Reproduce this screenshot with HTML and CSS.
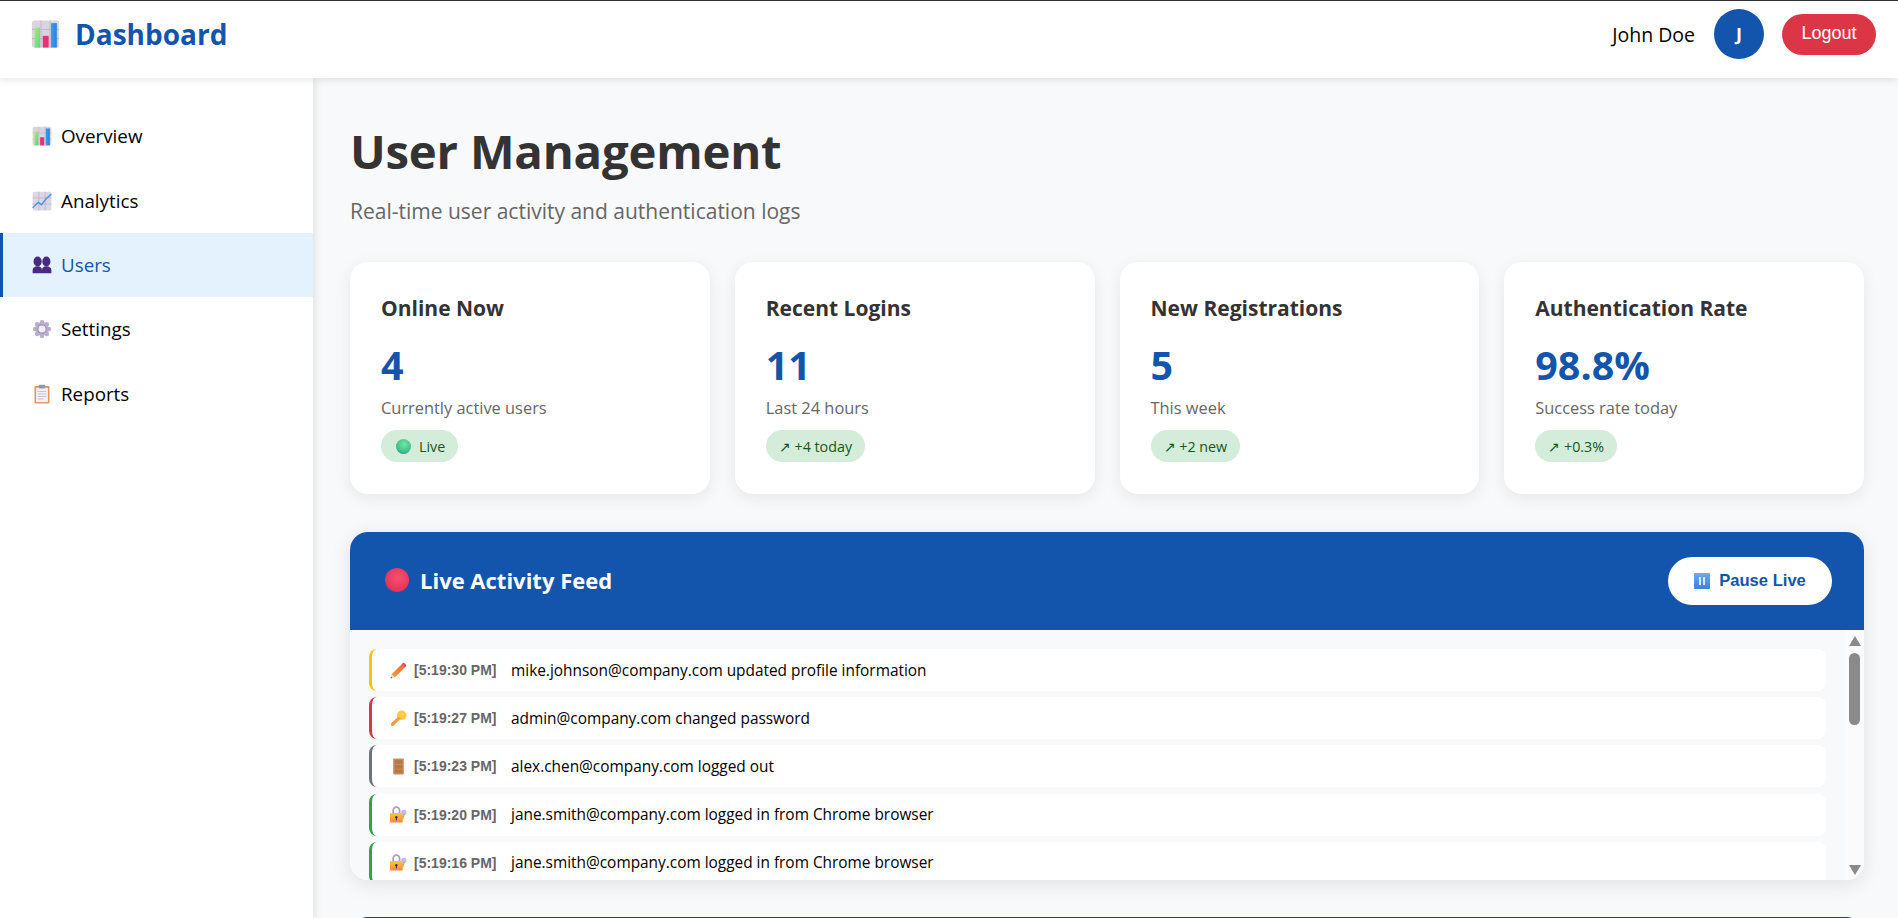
FILE: index.html
```html
<!DOCTYPE html>
<html lang="en">
<head>
<meta charset="utf-8">
<title>Dashboard</title>
<link rel="stylesheet" href="styles.css">
</head>
<body>
<svg class="defs" xmlns="http://www.w3.org/2000/svg" aria-hidden="true">
  <defs>
    <linearGradient id="gGreen" x1="0" y1="0" x2="1" y2="1"><stop offset="0" stop-color="#b5e86a"/><stop offset="1" stop-color="#4fd98a"/></linearGradient>
    <linearGradient id="gBlue" x1="0" y1="0" x2="1" y2="0"><stop offset="0" stop-color="#2fa4f2"/><stop offset="1" stop-color="#2a7fdc"/></linearGradient>
    <linearGradient id="gOrange" x1="0" y1="0" x2="0" y2="1"><stop offset="0" stop-color="#ffc83d"/><stop offset="1" stop-color="#f08a3c"/></linearGradient>
    <linearGradient id="gPencil" x1="0" y1="1" x2="1" y2="0"><stop offset="0" stop-color="#f9a13c"/><stop offset="1" stop-color="#f2662e"/></linearGradient>
    <linearGradient id="gPause" x1="0" y1="0" x2="0" y2="1"><stop offset="0" stop-color="#6aaaf5"/><stop offset="1" stop-color="#3f7fe0"/></linearGradient>
    <radialGradient id="gRed" cx=".55" cy=".4" r=".65"><stop offset="0" stop-color="#f8506e"/><stop offset=".75" stop-color="#e8385c"/><stop offset="1" stop-color="#c43656"/></radialGradient>
    <radialGradient id="gBall" cx=".55" cy=".35" r=".7"><stop offset="0" stop-color="#70e8a6"/><stop offset=".7" stop-color="#3fc38a"/><stop offset="1" stop-color="#2e8f86"/></radialGradient>
    <symbol id="i-bars" viewBox="0 0 32 32">
      <rect x="1" y="1" width="30" height="30" rx="3" fill="#d9d4e2"/>
      <path d="M11 1v30M21 1v30M1 11h30M1 21h30" stroke="#bdb5ca" stroke-width="1" fill="none"/>
      <rect x="4" y="9" width="6" height="22" fill="url(#gGreen)"/>
      <rect x="13" y="18" width="6.500" height="13" fill="#ea2f78"/>
      <rect x="22" y="4" width="6.500" height="27" fill="url(#gBlue)"/>
    </symbol>
    <symbol id="i-chart" viewBox="0 0 32 32">
      <rect x="1" y="1" width="30" height="30" rx="2.500" fill="#dcd6e6"/>
      <path d="M11 1v30M21 1v30M1 11h30M1 21h30" stroke="#b6aec6" stroke-width="1" fill="none"/>
      <path d="M1 27l9-9 5 4 8-10 8-7" stroke="#3a9ae8" stroke-width="2.200" fill="none"/>
    </symbol>
    <symbol id="i-users" viewBox="0 0 32 32">
      <g fill="#4a2a80">
        <ellipse cx="9" cy="10.500" rx="6.500" ry="8"/>
        <ellipse cx="23" cy="10.500" rx="6.500" ry="8"/>
        <path d="M1 29v-5c0-3 3-6 8-6s7 3 7 6c0-3 2-6 7-6s8 3 8 6v5z"/>
      </g>
    </symbol>
    <symbol id="i-gear" viewBox="0 0 32 32">
      <g fill="#b9aecf">
        <circle cx="16" cy="5" r="3.600"/><circle cx="16" cy="27" r="3.600"/>
        <circle cx="5" cy="16" r="3.600"/><circle cx="27" cy="16" r="3.600"/>
        <circle cx="8.200" cy="8.200" r="3.600"/><circle cx="23.800" cy="8.200" r="3.600"/>
        <circle cx="8.200" cy="23.800" r="3.600"/><circle cx="23.800" cy="23.800" r="3.600"/>
        <circle cx="16" cy="16" r="11"/>
      </g>
      <circle cx="16" cy="16" r="6.500" fill="#f2eef8"/>
      <circle cx="16" cy="16" r="6.500" fill="none" stroke="#8f81ab" stroke-width="1.500"/>
    </symbol>
    <symbol id="i-clip" viewBox="0 0 32 32">
      <rect x="4" y="3" width="24" height="28" rx="2" fill="#e0955c"/>
      <rect x="6.500" y="6" width="19" height="23" fill="#f3eff6"/>
      <rect x="11" y="1" width="10" height="6" rx="1.500" fill="#9b92a8"/>
      <path d="M9 12h14M9 16h14M9 20h14M9 24h9" stroke="#c2bacd" stroke-width="1.400"/>
    </symbol>
    <symbol id="i-pencil" viewBox="0 0 32 32">
      <path d="M3 23L21 5l6 6L9 29z" fill="url(#gPencil)"/>
      <path d="M21 5l3-3c1-1 2-1 3 0l3 3c1 1 1 2 0 3l-3 3z" fill="#f2475f"/>
      <path d="M3 23l-2 8 8-2z" fill="#f6d9b8"/>
      <path d="M1 31l1-3.500 2.500 2.500z" fill="#6b4a8a"/>
    </symbol>
    <symbol id="i-key" viewBox="0 0 32 32">
      <circle cx="22" cy="10" r="9" fill="#ffc83d"/>
      <path d="M16 12l4 4L6 30H2v-5z" fill="#f49a3a"/>
      <circle cx="24" cy="8" r="2" fill="#ffe08a"/>
    </symbol>
    <symbol id="i-door" viewBox="0 0 32 32">
      <rect x="6" y="1" width="20" height="30" rx="1.500" fill="#c88a5c"/>
      <rect x="9" y="4" width="14" height="7" fill="#b57648"/>
      <rect x="9" y="13" width="14" height="7" fill="#b57648"/>
      <rect x="9" y="22" width="14" height="6" fill="#b57648"/>
    </symbol>
    <symbol id="i-lock" viewBox="0 0 32 32">
      <circle cx="26" cy="12" r="5" fill="#c3bad3"/>
      <path d="M24 15l-2 9 3 1 3-9z" fill="#b1a6c6"/>
      <path d="M6 15V9c0-4 3-7 6-7s6 3 6 7v6" fill="none" stroke="#a99ec0" stroke-width="3.500"/>
      <rect x="0" y="13" width="24" height="18" rx="2" fill="url(#gOrange)"/>
      <circle cx="12" cy="21" r="2.200" fill="#432c5c"/>
      <rect x="11" y="21" width="2" height="6" fill="#432c5c"/>
    </symbol>
    <symbol id="i-pause" viewBox="0 0 32 32">
      <rect x="0" y="0" width="32" height="32" rx="2" fill="url(#gPause)"/>
      <rect x="10" y="8" width="4" height="16" fill="#dbe9fc"/>
      <rect x="18" y="8" width="4" height="16" fill="#dbe9fc"/>
    </symbol>
  </defs>
</svg>

<header class="topbar">
  <div class="brand">
    <svg class="brand-icon"><use href="#i-bars"/></svg>
    <span class="brand-name">Dashboard</span>
  </div>
  <div class="user-box">
    <span class="user-name">John Doe</span>
    <div class="avatar">J</div>
    <button class="logout">Logout</button>
  </div>
</header>

<div class="app">
  <nav class="sidebar">
    <a class="nav-item"><svg class="nav-icon"><use href="#i-bars"/></svg>Overview</a>
    <a class="nav-item"><svg class="nav-icon"><use href="#i-chart"/></svg>Analytics</a>
    <a class="nav-item active"><svg class="nav-icon"><use href="#i-users"/></svg>Users</a>
    <a class="nav-item"><svg class="nav-icon"><use href="#i-gear"/></svg>Settings</a>
    <a class="nav-item"><svg class="nav-icon"><use href="#i-clip"/></svg>Reports</a>
  </nav>

  <main class="content">
    <h1 class="page-title">User Management</h1>
    <p class="page-sub">Real-time user activity and authentication logs</p>

    <section class="cards">
      <article class="card">
        <h3 class="card-title">Online Now</h3>
        <div class="card-value">4</div>
        <div class="card-sub">Currently active users</div>
        <span class="badge"><svg class="badge-ball" viewBox="0 0 14 14"><circle cx="7" cy="7" r="7" fill="url(#gBall)"/></svg>Live</span>
      </article>
      <article class="card">
        <h3 class="card-title">Recent Logins</h3>
        <div class="card-value">11</div>
        <div class="card-sub">Last 24 hours</div>
        <span class="badge">↗ +4 today</span>
      </article>
      <article class="card">
        <h3 class="card-title">New Registrations</h3>
        <div class="card-value">5</div>
        <div class="card-sub">This week</div>
        <span class="badge">↗ +2 new</span>
      </article>
      <article class="card">
        <h3 class="card-title">Authentication Rate</h3>
        <div class="card-value">98.8%</div>
        <div class="card-sub">Success rate today</div>
        <span class="badge">↗ +0.3%</span>
      </article>
    </section>

    <section class="feed">
      <div class="feed-head">
        <h2 class="feed-title"><svg class="feed-ball" viewBox="0 0 24 24"><circle cx="12" cy="12" r="12" fill="url(#gRed)"/></svg>Live Activity Feed</h2>
        <button class="pause"><svg class="pause-icon"><use href="#i-pause"/></svg>Pause Live</button>
      </div>
      <div class="feed-body">
        <div class="feed-list">
          <div class="row row-update"><svg class="row-icon"><use href="#i-pencil"/></svg><span class="row-time">[5:19:30 PM]</span><span class="row-msg">mike.johnson@company.com updated profile information</span></div>
          <div class="row row-pass"><svg class="row-icon"><use href="#i-key"/></svg><span class="row-time">[5:19:27 PM]</span><span class="row-msg">admin@company.com changed password</span></div>
          <div class="row row-out"><svg class="row-icon"><use href="#i-door"/></svg><span class="row-time">[5:19:23 PM]</span><span class="row-msg">alex.chen@company.com logged out</span></div>
          <div class="row row-in"><svg class="row-icon"><use href="#i-lock"/></svg><span class="row-time">[5:19:20 PM]</span><span class="row-msg">jane.smith@company.com logged in from Chrome browser</span></div>
          <div class="row row-in"><svg class="row-icon"><use href="#i-lock"/></svg><span class="row-time">[5:19:16 PM]</span><span class="row-msg">jane.smith@company.com logged in from Chrome browser</span></div>
        </div>
        <div class="scrollbar">
          <div class="arrow-up"></div>
          <div class="thumb-track"><div class="thumb"></div></div>
          <div class="arrow-down"></div>
        </div>
      </div>
    </section>

    <section class="next-panel"></section>
  </main>
</div>
</body>
</html>
```
FILE: styles.css
```css
* { box-sizing: border-box; }
html, body { height: 100%; }
body {
  margin: 0;
  height: 918px;
  overflow: hidden;
  display: flex;
  flex-direction: column;
  background: #f8f9fa;
  color: #000;
  font-family: "Open Sans", "Noto Sans", sans-serif;
}
.defs { display: block; width: 0; height: 0; overflow: hidden; }

.topbar {
  flex: 0 0 78px;
  display: flex;
  align-items: center;
  justify-content: space-between;
  padding: 0 22px 11px 31px;
  background: #fff;
  border-top: 1px solid #2f2f2f;
  box-shadow: 0 2px 8px rgba(0,0,0,.1);
  position: relative;
  z-index: 2;
}
.brand { display: flex; align-items: center; gap: 15px; }
.brand-icon { width: 29px; height: 30px; }
.brand-name { font-size: 28px; font-weight: 700; color: #1355ac; }
.user-box { display: flex; align-items: center; }
.user-name { font-size: 19.5px; margin-right: 19px; }
.avatar {
  width: 50px; height: 50px; border-radius: 50%;
  background: #1355ac; color: #fff;
  display: flex; align-items: center; justify-content: center;
  font-size: 18px; font-weight: 700;
  margin-right: 18px;
}
.logout {
  width: 94px; height: 41px; border: 0; border-radius: 21px;
  background: #dc3545; color: #fff;
  font-family: "Liberation Sans", sans-serif; font-size: 18px;
  padding: 0 0 2px;
}

.app { flex: 1; display: flex; min-height: 0; }
.sidebar {
  flex: 0 0 313px;
  padding-top: 26px;
  background: #fff;
  box-shadow: 2px 0 8px rgba(0,0,0,.1);
  position: relative;
  z-index: 1;
}
.nav-item {
  height: 64.4px;
  display: flex; align-items: center;
  padding-left: 32px;
  font-size: 18.8px;
  color: #000;
}
.nav-item.active {
  background: #e3f2fd; color: #1355ac;
  border-left: 3px solid #1355ac;
  padding-left: 29px;
}
.nav-icon { width: 20px; height: 20px; margin-right: 9px; flex: none; }

.content {
  flex: 1; min-width: 0;
  padding: 0 34px 0 37px;
  overflow: hidden;
}
.page-title {
  margin: 38.5px 0 0;
  font-size: 47.3px; line-height: 68px; font-weight: 700;
  letter-spacing: -.2px;
  color: #333;
}
.page-sub {
  margin: 11.5px 0 0;
  font-size: 21px; line-height: 30px;
  color: #666;
}

.cards {
  display: grid;
  grid-template-columns: repeat(4, 1fr);
  gap: 25px;
  margin-top: 36px;
}
.card {
  height: 232px;
  padding: 31px 31px 0;
  background: #fff;
  border-radius: 18px;
  box-shadow: 0 4px 16px rgba(0,0,0,.08);
}
.card-title {
  margin: 0;
  font-size: 21px; line-height: 30px; font-weight: 700;
  color: #333;
}
.card-value {
  margin-top: 14.5px;
  font-size: 39.5px; line-height: 54px; font-weight: 700;
  color: #1355ac;
}
.card-sub {
  margin-top: 4px;
  font-size: 16.4px; line-height: 24px;
  color: #666;
}
.badge {
  display: inline-flex; align-items: center;
  height: 32px; margin-top: 10.5px;
  padding: 0 13px;
  border-radius: 16px;
  background: #d4edda; color: #155724;
  font-size: 14.3px;
}
.badge-ball { width: 15px; height: 15px; margin: 0 8px 0 2px; }

.feed {
  margin-top: 38px;
  height: 348px;
  display: flex; flex-direction: column;
  background: #fff;
  border-radius: 18px;
  overflow: hidden;
  box-shadow: 0 4px 20px rgba(0,0,0,.1);
}
.feed-head {
  flex: 0 0 98px;
  display: flex; align-items: center; justify-content: space-between;
  padding: 0 32px 0 35px;
  background: #1355ac;
}
.feed-title {
  display: flex; align-items: center;
  margin: 0 0 2px;
  font-size: 22px; font-weight: 700; color: #fff;
}
.feed-ball { width: 24px; height: 24px; margin-right: 11px; }
.pause {
  width: 164px; height: 48px;
  display: flex; align-items: center; justify-content: center;
  border: 0; border-radius: 24px;
  background: #fff; color: #1355ac;
  font-family: "Liberation Sans", sans-serif; font-size: 16.6px; font-weight: 700;
}
.pause-icon { width: 16px; height: 16px; margin-right: 9px; }

.feed-body { flex: 1; min-height: 0; display: flex; background: #f8f9fa; }
.feed-list {
  flex: 1; min-width: 0;
  padding: 19px 19px 0;
  overflow: hidden;
  display: flex; flex-direction: column; gap: 6.2px;
}
.row {
  flex: 0 0 42px;
  display: flex; align-items: center;
  padding-left: 18px;
  background: #fff;
  border-left: 3px solid #28a745;
  border-radius: 8px;
  font-size: 15.4px;
}
.row-update { border-left-color: #ffc107; }
.row-pass { border-left-color: #dc3545; }
.row-out { border-left-color: #6c757d; }
.row-in { border-left-color: #28a745; }
.row-icon { width: 17px; height: 17px; margin-right: 7px; flex: none; }
.row-time {
  width: 97px; flex: none;
  font-family: "Liberation Sans", sans-serif;
  font-size: 14px; font-weight: 700; color: #666;
}

.scrollbar {
  flex: 0 0 19px;
  display: flex; flex-direction: column; align-items: center;
  padding: 6px 0 5px;
  background: #fbfbfc;
}
.arrow-up, .arrow-down {
  width: 0; height: 0; flex: none;
  border-left: 6.5px solid transparent;
  border-right: 6.5px solid transparent;
}
.arrow-up { border-bottom: 10px solid #8a8a8a; }
.arrow-down { border-top: 10px solid #8a8a8a; }
.thumb-track { flex: 1; padding-top: 7px; }
.thumb { width: 11px; height: 72px; border-radius: 6px; background: #8a8a8a; }

.next-panel {
  margin-top: 37px;
  height: 300px;
  background: #1355ac;
  border-radius: 18px;
  border-top: 1px solid #1f3f70;
}
```
